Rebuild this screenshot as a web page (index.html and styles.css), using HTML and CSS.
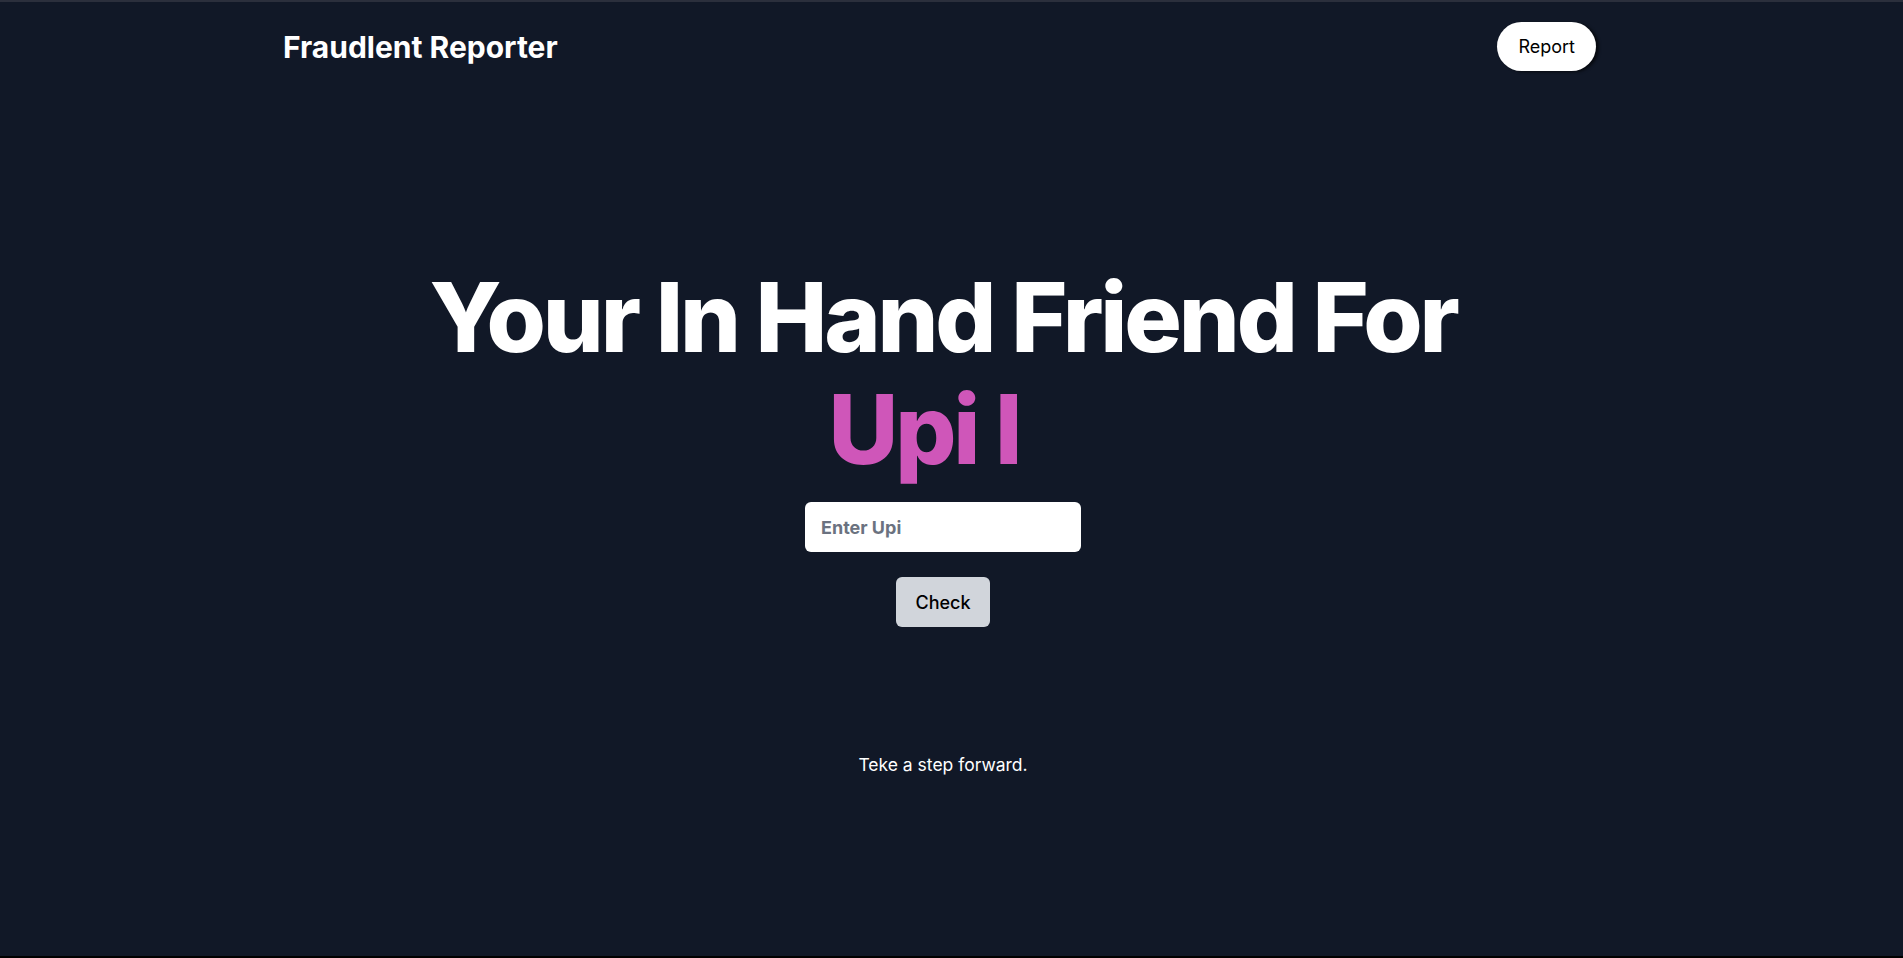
FILE: index.html
```html
<!DOCTYPE html>
<html lang="en">
<head>
<meta charset="utf-8">
<title>Fraudlent Reporter</title>
<link rel="stylesheet" href="styles.css">
</head>
<body>
<div class="page">
  <header class="nav">
    <div class="brand">Fraudlent Reporter</div>
    <button class="report-btn">Report</button>
  </header>
  <main class="hero">
    <h1 class="headline">Your In Hand Friend For<br><span class="accent">Upi I</span></h1>
    <input class="upi-input" type="text" placeholder="Enter Upi">
    <button class="check-btn">Check</button>
    <p class="tagline">Teke a step forward.</p>
  </main>
</div>
</body>
</html>
```
FILE: styles.css
```css
* { box-sizing: border-box; }
html, body { margin: 0; padding: 0; }
body {
  background: #111827;
  font-family: Inter, "Noto Sans", sans-serif;
  color: #ffffff;
  height: 958px;
  overflow: hidden;
  border-top: 2px solid #2b2f3c;
  border-bottom: 2px solid #000000;
}
.page {
  width: calc(100% - 17px);
  height: 954px;
}
.nav {
  width: 1320px;
  margin: 0 auto;
  padding-top: 20px;
  display: flex;
  align-items: center;
  justify-content: space-between;
}
.brand {
  font-size: 30px;
  font-weight: 700;
  line-height: 36px;
}
.report-btn {
  margin-right: 7px;
  height: 49px;
  padding: 0 21px;
  border: none;
  border-radius: 999px;
  background: #ffffff;
  color: #000000;
  font-family: inherit;
  font-size: 18px;
  box-shadow: 3px 1px 3px rgba(0,0,0,0.6);
}
.hero {
  display: flex;
  flex-direction: column;
  align-items: center;
}
.headline {
  margin: 190px 0 0;
  font-size: 96px;
  font-weight: 800;
  line-height: 112px;
  letter-spacing: -0.033em;
  text-align: center;
}
.accent {
  color: #cf56b9;
  padding-right: 38px;
}
.upi-input {
  margin-top: 17px;
  width: 276px;
  height: 50px;
  border: none;
  border-radius: 6px;
  padding: 0 16px;
  font-family: inherit;
  font-size: 18px;
  font-weight: 700;
  color: #111827;
  background: #ffffff;
  outline: none;
}
.upi-input::placeholder { color: #6b7280; }
.check-btn {
  margin-top: 25px;
  width: 94px;
  height: 50px;
  border: none;
  border-radius: 6px;
  background: #d1d5db;
  color: #000000;
  font-family: inherit;
  font-size: 18px;
  font-weight: 500;
}
.tagline {
  margin: 124px 0 0;
  font-size: 17.5px;
  line-height: 28px;
}
```
